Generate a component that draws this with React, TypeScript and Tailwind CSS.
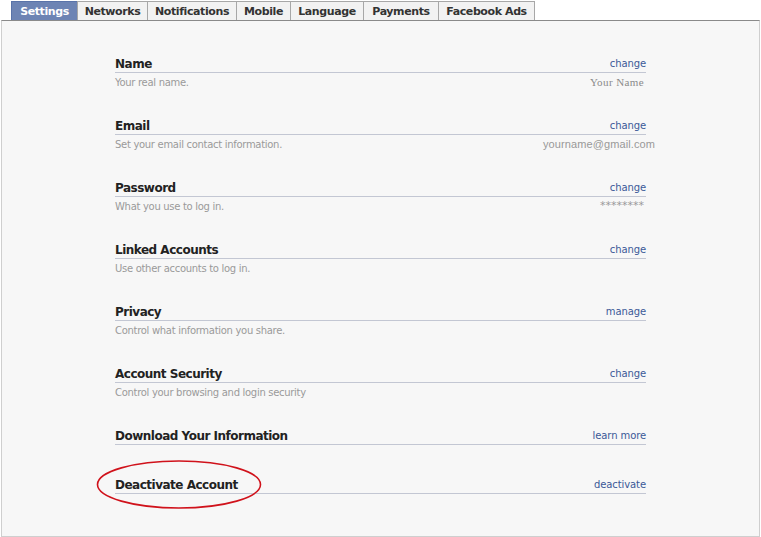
import React from 'react';

const tabs = [
  { label: 'Settings', w: 'w-[66px]', active: true },
  { label: 'Networks', w: 'w-[70px]' },
  { label: 'Notifications', w: 'w-[89px]' },
  { label: 'Mobile', w: 'w-[54px]' },
  { label: 'Language', w: 'w-[73px]' },
  { label: 'Payments', w: 'w-[75px]' },
  { label: 'Facebook Ads', w: 'w-[97px]' },
];

type Row = {
  title: string;
  desc?: string;
  action: string;
  value?: React.ReactNode;
};

const rows: Row[] = [
  {
    title: 'Name',
    desc: 'Your real name.',
    action: 'change',
    value: <span className="font-['Liberation_Serif',serif] text-[11px] tracking-[0.4px] text-[#8a8a8a]">Your Name</span>,
  },
  {
    title: 'Email',
    desc: 'Set your email contact information.',
    action: 'change',
    value: (
      <span className="-mr-[11px] font-['Liberation_Sans',sans-serif] text-[11px] tracking-[0.1px] text-[#999]">
        yourname@gmail.com
      </span>
    ),
  },
  {
    title: 'Password',
    desc: 'What you use to log in.',
    action: 'change',
    value: <span className="text-[11px] text-[#999]">********</span>,
  },
  { title: 'Linked Accounts', desc: 'Use other accounts to log in.', action: 'change' },
  { title: 'Privacy', desc: 'Control what information you share.', action: 'manage' },
  { title: 'Account Security', desc: 'Control your browsing and login security', action: 'change' },
  { title: 'Download Your Information', action: 'learn more' },
  { title: 'Deactivate Account', action: 'deactivate' },
];

function SettingRow({ row, last }: { row: Row; last?: boolean }) {
  return (
    <div className={row.desc ? 'h-[62px]' : last ? 'h-[40px]' : 'h-[49px]'}>
      <div className="flex h-[18px] items-end justify-between border-b border-[#c3c7d3] pb-[2px] leading-[12px]">
        <span className="text-[12px] font-bold tracking-[-0.5px] text-[#222]">{row.title}</span>
        <a className="text-[10px] tracking-[-0.1px] text-[#3b5998]">{row.action}</a>
      </div>
      {row.desc && (
        <div className="flex h-[17px] items-center justify-between pr-[2px] pt-[1px]">
          <span className="text-[10px] tracking-[-0.3px] text-[#9a9a9a]">{row.desc}</span>
          {row.value}
        </div>
      )}
    </div>
  );
}

export default function App() {
  return (
    <div className="relative h-[537px] w-[761px] bg-white font-['DejaVu_Sans',sans-serif]">
      <div className="flex h-[20px] pl-[11px] pt-[1px]">
        {tabs.map((t, i) => (
          <div
            key={t.label}
            className={`${t.w} flex h-[19px] items-center justify-center border-l border-t pt-[2px] text-[11px] font-bold tracking-[-0.4px] ${
              i === tabs.length - 1 ? 'border-r' : ''
            } ${
              t.active
                ? 'border-[#5973a9] bg-[#6d84b4] text-white'
                : 'border-[#a7a7a7] bg-[#f2f2f2] text-[#333]'
            }`}
          >
            {t.label}
          </div>
        ))}
      </div>
      <div className="mx-[1px] h-[517px] border border-[#cfcfcf] border-t-[#8a8a8a] bg-[#f7f7f7] pl-[113px] pr-[113px] pt-[34px]">
        {rows.map((r, i) => (
          <SettingRow key={r.title} row={r} last={i === rows.length - 1} />
        ))}
      </div>
      <svg className="absolute left-[95px] top-[459px]" width="168" height="52" viewBox="0 0 168 52">
        <ellipse cx="84" cy="25.5" rx="81.5" ry="23.5" fill="none" stroke="#d0121b" strokeWidth="1.6" />
      </svg>
    </div>
  );
}
